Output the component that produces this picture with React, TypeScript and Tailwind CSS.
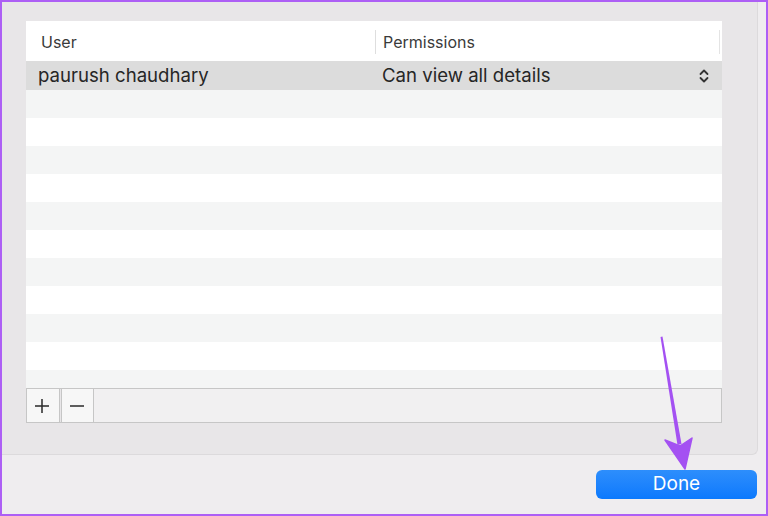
const rows = Array.from({ length: 11 }, (_, i) => i);

export default function App() {
  return (
    <div
      className="relative flex h-[516px] w-[768px] flex-col border-2 border-[#ad5ff5] bg-[#efedef]"
      style={{ fontFamily: "Inter, 'Liberation Sans', sans-serif" }}
    >
      <div className="h-[453px] w-[756px] rounded-br-md border-b border-r border-[#dcdadc] bg-[#e8e6e8] pl-6 pt-[19px]">
        <div className="w-[696px]">
          <div className="flex h-10 items-center bg-white pt-[2px] text-[16px] text-[#3a3a3a]">
            <span className="w-[349px] pl-[15px]">User</span>
            <span className="h-6 w-px bg-[#dedede]" />
            <span className="flex-1 pl-[7px]">Permissions</span>
            <span className="mr-[2px] h-6 w-px bg-[#e4e4e4]" />
          </div>
          <div className="flex h-[29px] items-center bg-[#dcdcdc] text-[18.6px] text-[#262626]">
            <span className="w-[344px] pl-3">paurush chaudhary</span>
            <span className="flex-1 pl-3">Can view all details</span>
            <svg width="12" height="16" viewBox="0 0 12 16" className="mr-3" fill="none" stroke="#333" strokeWidth="1.8" strokeLinecap="round" strokeLinejoin="round">
              <path d="M2.5 6 6 2.5 9.5 6" />
              <path d="M2.5 10 6 13.5 9.5 10" />
            </svg>
          </div>
          <div className="h-[298px] overflow-hidden">
            {rows.map((i) => (
              <div key={i} className={`h-7 ${i % 2 === 0 ? "bg-[#f4f5f5]" : "bg-white"}`} />
            ))}
          </div>
          <div className="flex h-[35px] border border-[#c6c6c6] bg-[#f1f0f1]">
            <button className="flex w-[33px] items-center justify-center border-r border-[#c6c6c6] bg-[#f7f7f7] pr-[2px] text-[#2a2a2a]">
              <svg width="16" height="16" viewBox="0 0 16 16" stroke="currentColor" strokeWidth="1.5">
                <path d="M8 1v14M1 8h14" />
              </svg>
            </button>
            <span className="w-px bg-[#e8e6e8]" />
            <button className="flex w-[33px] items-center justify-center border-x border-[#c6c6c6] bg-[#f7f7f7] pr-[2px] text-[#2a2a2a]">
              <svg width="16" height="16" viewBox="0 0 16 16" stroke="currentColor" strokeWidth="1.5">
                <path d="M1 8h14" />
              </svg>
            </button>
          </div>
        </div>
      </div>
      <div className="flex justify-end pr-[9px] pt-[15px]">
        <button className="flex h-[29px] w-[161px] items-center justify-center rounded-md bg-gradient-to-b from-[#2d8efc] to-[#0a79fd] text-[19px] text-white">
          Done
        </button>
      </div>
      {/* pointer arrow drawn over the dialog */}
      <svg className="absolute left-0 top-0" width="768" height="516" viewBox="0 0 768 516">
        <path d="M658.5 335 L660.5 334.6 L679.5 442 L675.5 443 Z" fill="#a451f2" />
        <path d="M663 438 L683 467 L690 436 L678 444 Z" fill="#a451f2" stroke="#a451f2" strokeWidth="1.5" strokeLinejoin="round" />
      </svg>
    </div>
  );
}
